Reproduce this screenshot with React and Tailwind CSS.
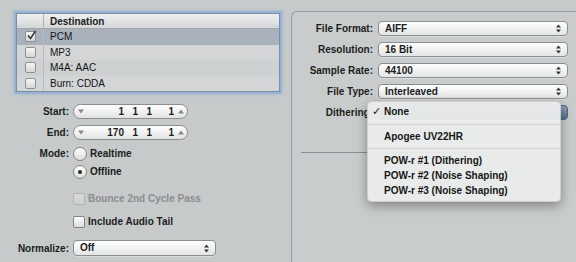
import React from 'react'

function Arrows() {
  return (
    <svg width="5" height="9" viewBox="0 0 5 9" className="shrink-0">
      <path d="M2.5 0.5 L5 3.5 H0 Z M2.5 8.5 L5 5.5 H0 Z" fill="#333" />
    </svg>
  )
}

function Select({ value, className = '' }) {
  return (
    <div className={`flex items-center justify-between h-[15px] rounded-[4px] border border-[#8a8d8f] bg-linear-to-b from-white to-[#e3e4e5] pl-[6px] pr-[6px] text-[10px] font-bold text-[#1c1c1c] shadow-[0_1px_0_rgba(255,255,255,0.35)] ${className}`}>
      <span className="leading-none">{value}</span>
      <Arrows />
    </div>
  )
}

function Check({ disabled }) {
  return (
    <div className={`w-[12px] h-[12px] rounded-[2px] border ${disabled ? 'border-[#b2b5b6] bg-linear-to-b from-[#d6d8d9] to-[#cdd0d1]' : 'border-[#828486] bg-linear-to-b from-white to-[#dadbdc]'}`} />
  )
}

function Radio({ on }) {
  return (
    <div className="w-[14px] h-[14px] rounded-full border border-[#838587] bg-linear-to-b from-white to-[#dcdddd] flex items-center justify-center">
      {on && <div className="w-[4px] h-[4px] rounded-full bg-[#2a2a2a]" />}
    </div>
  )
}

function Tri({ up }) {
  return (
    <svg width="6" height="5" viewBox="0 0 6 5" className="shrink-0">
      <path d={up ? 'M3 0.5 L6 4.5 H0 Z' : 'M0 0.5 H6 L3 4.5 Z'} fill="#8a8a8a" />
    </svg>
  )
}

function Spinner({ bar }) {
  return (
    <div className="flex items-center w-[115px] h-[15px] rounded-full border border-[#8a8d8f] bg-linear-to-b from-white to-[#e2e3e4] text-[10px] font-bold text-[#1c1c1c]">
      <span className="ml-[4px] flex"><Tri /></span>
      <span className="w-[40px] text-right">{bar}</span>
      <span className="w-[14px] text-right">1</span>
      <span className="w-[14px] text-right">1</span>
      <span className="w-[22px] text-right">1</span>
      <span className="ml-[4px] flex"><Tri up /></span>
    </div>
  )
}

const rows = [
  { name: 'PCM', on: true },
  { name: 'MP3' },
  { name: 'M4A: AAC' },
  { name: 'Burn: CDDA' },
]

const rowBg = ['bg-[#a9b2bc]', 'bg-[#d3d5d6]', 'bg-[#ced1d2]', 'bg-[#d3d5d6]']

function DestinationTable() {
  return (
    <div className="ml-[16px] mt-[13px] w-[264px] border border-[#7b8fa6] shadow-[0_0_0_2px_#98b3d3,0_0_3px_2px_rgba(120,160,210,0.5)] bg-[#d3d5d6]">
      <div className="flex h-[15px] bg-linear-to-b from-[#eef0f0] to-[#d4d7d8] border-b border-[#a3a7a9]">
        <div className="w-[27px] border-r border-[#b1b4b6]" />
        <div className="pl-[6px] text-[10px] font-bold leading-[15px] text-[#1c1c1c]">Destination</div>
      </div>
      {rows.map((r, i) => (
        <div key={r.name} className={`flex h-[15.5px] ${rowBg[i]}`}>
          <div className="w-[27px] border-r border-[#b8bbbd] flex items-center justify-center">
            <div className="relative w-[11px] h-[11px] rounded-[2px] border border-[#8d9092] bg-linear-to-b from-[#f6f6f6] to-[#d4d6d7]">
              {r.on && (
                <svg width="11" height="11" viewBox="0 0 11 11" className="absolute left-[0px] top-[-2px]">
                  <path d="M2 5.5 L4.5 8.5 L9.5 1" stroke="#333" strokeWidth="1.5" fill="none" />
                </svg>
              )}
            </div>
          </div>
          <div className="pl-[6px] text-[10px] leading-[15.5px] text-[#141414]">{r.name}</div>
        </div>
      ))}
    </div>
  )
}

function FormRow({ label, children, className = '' }) {
  return (
    <div className={`flex items-center ${className}`}>
      <div className="w-[70px] text-right text-[10px] font-bold text-[#1c1c1c] pr-[1px]">{label}</div>
      <div className="ml-[3px] flex items-center">{children}</div>
    </div>
  )
}

const menuItems = [
  'POW-r #1 (Dithering)',
  'POW-r #2 (Noise Shaping)',
  'POW-r #3 (Noise Shaping)',
]

function DitheringMenu() {
  return (
    <div className="absolute left-[75px] top-[89px] w-[194px] h-[101px] rounded-[5px] bg-[#ebecec]/95 border border-[rgba(0,0,0,0.12)] shadow-[0_4px_12px_rgba(0,0,0,0.35)] pt-[2px] text-[10px] font-bold text-[#161616]">
      <div className="relative h-[15px] leading-[15px] pl-[16px]">
        <span className="absolute left-[4px] top-0 text-[11px] font-['DejaVu_Sans',sans-serif]">✓</span>
        None
      </div>
      <div className="h-[10px] flex items-center"><div className="h-px w-full bg-[#d0d1d2]" /></div>
      <div className="h-[15px] leading-[15px] pl-[16px]">Apogee UV22HR</div>
      <div className="h-[9px] flex items-center"><div className="h-px w-full bg-[#d0d1d2]" /></div>
      {menuItems.map(m => (
        <div key={m} className="h-[15px] leading-[15px] pl-[16px]">{m}</div>
      ))}
    </div>
  )
}

export default function App() {
  const right = [
    ['File Format:', 'AIFF'],
    ['Resolution:', '16 Bit'],
    ['Sample Rate:', '44100'],
    ['File Type:', 'Interleaved'],
  ]
  return (
    <div className="w-[576px] h-[262px] overflow-hidden bg-[#c6cacb] flex font-['Liberation_Sans',Arial,sans-serif]">
      <div className="w-[291px] shrink-0 flex flex-col">
        <DestinationTable />
        <div className="mt-[12px] flex flex-col">
          <FormRow label="Start:"><Spinner bar="1" /></FormRow>
          <FormRow label="End:" className="mt-[6px]"><Spinner bar="170" /></FormRow>
          <FormRow label="Mode:" className="mt-[6px]">
            <Radio />
            <span className="ml-[3px] text-[10px] font-bold text-[#1c1c1c]">Realtime</span>
          </FormRow>
          <FormRow label="" className="mt-[3px]">
            <Radio on />
            <span className="ml-[3px] text-[10px] font-bold text-[#1c1c1c]">Offline</span>
          </FormRow>
          <FormRow label="" className="mt-[12px]">
            <Check disabled />
            <span className="ml-[3px] text-[10px] font-bold text-[#8a8d8f]">Bounce 2nd Cycle Pass</span>
          </FormRow>
          <FormRow label="" className="mt-[8px]">
            <Check />
            <span className="ml-[3px] text-[10px] font-bold text-[#1c1c1c]">Include Audio Tail</span>
          </FormRow>
          <FormRow label="Normalize:" className="mt-[11px]">
            <Select value="Off" className="w-[143px] h-[16px]" />
          </FormRow>
        </div>
      </div>
      <div className="relative flex-1 mt-[11px] h-[260px] border-l border-t border-[#979b9d] rounded-tl-[6px] bg-[#c8cccd] pt-[9px]">
        {right.map(([l, v]) => (
          <div key={l} className="flex items-center h-[15px] mb-[6px]">
            <div className="w-[81px] text-right text-[10px] font-bold text-[#1c1c1c]">{l}</div>
            <Select value={v} className="ml-[5px] w-[190px]" />
          </div>
        ))}
        <div className="flex items-center h-[15px]">
          <div className="w-[81px] text-right text-[10px] font-bold text-[#1c1c1c]">Dithering:</div>
          <div className="ml-[5px] w-[190px] h-[15px] rounded-[4px] border border-[#4f6680] bg-linear-to-b from-[#8ea3bb] to-[#566f8c]" />
        </div>
        <div className="mt-[32px] ml-[9px] mr-[20px] h-px bg-[#8b8e90]" />
        <DitheringMenu />
      </div>
    </div>
  )
}
